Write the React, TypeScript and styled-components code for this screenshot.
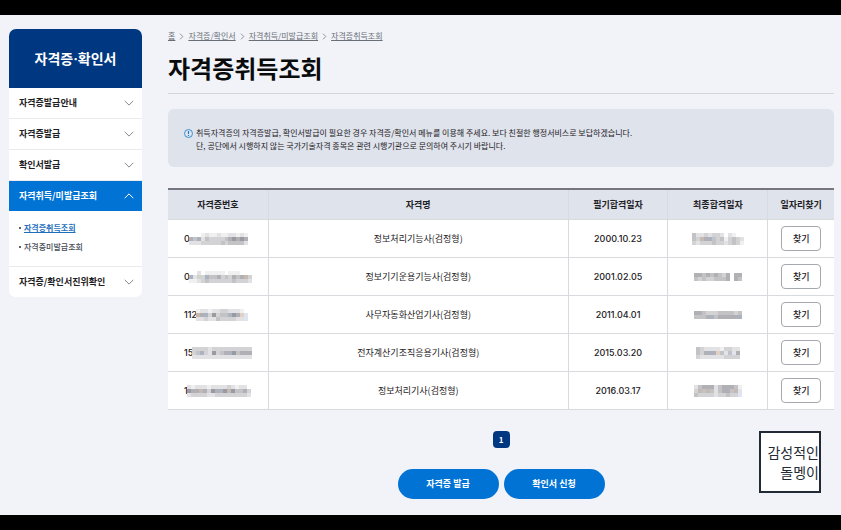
import React from "react";
import styled, { createGlobalStyle, css } from "styled-components";

const GlobalStyle = createGlobalStyle`
  * { box-sizing: border-box; }
  body {
    margin: 0;
    background: #f1f3f8;
    color: #1e2124;
    font-family: "Noto Sans CJK KR", "Noto Sans", sans-serif;
    font-size: 9px;
    line-height: 14px;
  }
  button { font: inherit; cursor: pointer; padding: 0; }
  ul, ol { list-style: none; margin: 0; padding: 0; }
`;

const Page = styled.div`
  display: flex;
  flex-direction: column;
  min-height: 100vh;
  border-top: 15px solid #000;
  border-bottom: 15px solid #000;
`;

const Content = styled.div`
  flex: 1;
  display: flex;
  align-items: flex-start;
  gap: 26px;
  padding: 14px 7px 12px 9px;
`;

const Sidebar = styled.nav`
  flex: 0 0 133px;
  overflow: hidden;
  border-radius: 7px;
  background: #fff;
`;

const SidebarTitle = styled.h2`
  display: flex;
  align-items: center;
  justify-content: center;
  height: 59px;
  margin: 0;
  background: #003781;
  color: #fff;
  font-family: Inter, "Noto Sans CJK KR", sans-serif;
  font-size: 14px;
  font-weight: 700;
  line-height: 20px;
`;

const MenuItem = styled.li`
  & + & { border-top: 1px solid #e9ebee; }
`;

const MenuButton = styled.button<{ $active?: boolean }>`
  display: flex;
  align-items: center;
  justify-content: space-between;
  width: 100%;
  height: 30px;
  padding: 0 8px 0 10px;
  border: 0;
  background: ${(p) => (p.$active ? "#0073d5" : "#fff")};
  color: ${(p) => (p.$active ? "#fff" : "#1e2124")};
  font-weight: 700;
`;

const SubMenu = styled.ul`
  display: grid;
  gap: 5px;
  padding: 10px 10px 12px;
`;

const SubItem = styled.li`
  display: flex;
  align-items: center;
  gap: 3px;
  height: 14px;
  &::before {
    content: "";
    width: 2px;
    height: 2px;
    background: #5a6270;
  }
`;

const SubLink = styled.a<{ $current?: boolean }>`
  color: ${(p) => (p.$current ? "#1f6fbd" : "#464c53")};
  font-size: 8px;
  font-weight: ${(p) => (p.$current ? 700 : 500)};
  text-decoration: ${(p) => (p.$current ? "underline" : "none")};
`;

const Main = styled.main`
  flex: 1;
  min-width: 0;
`;

const Breadcrumb = styled.ol`
  display: flex;
  align-items: center;
  gap: 4px;
  height: 14px;
  font-size: 8px;
`;

const Crumb = styled.li`
  display: flex;
  align-items: center;
  gap: 4px;
`;

const CrumbLink = styled.a`
  color: #6a6f77;
  text-decoration: underline;
`;

const PageTitle = styled.h1`
  margin: 8px 0 0;
  padding-bottom: 8px;
  border-bottom: 1px solid #d3d7dd;
  color: #0a0b0d;
  font-size: 24px;
  font-weight: 700;
  line-height: 34px;
`;

const Notice = styled.section`
  display: flex;
  align-items: flex-start;
  gap: 3px;
  margin-top: 15px;
  padding: 17px 16px 15px;
  border-radius: 6px;
  background: #dee3ec;
  font-size: 8px;
  line-height: 13px;
  & p { margin: 0; }
  & svg { flex: none; margin-top: 3px; }
`;

const Results = styled.table`
  width: 100%;
  margin-top: 21px;
  table-layout: fixed;
  border-collapse: separate;
  border-spacing: 0;
  border-top: 2px solid #74757e;
  text-align: center;
`;

const cell = css`
  padding: 0;
  border-bottom: 1px solid #d8dadd;
  & + & { border-left: 1px solid #d8dadd; }
`;

const HeadCell = styled.th<{ $width: string }>`
  ${cell}
  width: ${(p) => p.$width};
  height: 30px;
  background: #dee3ec;
  font-weight: 700;
`;

const BodyCell = styled.td`
  ${cell}
  height: 38px;
  background: #fff;
`;

const DateText = styled.time`
  font-family: Inter, "Noto Sans CJK KR", sans-serif;
  font-weight: 500;
`;

const MaskedNumber = styled.span`
  display: flex;
  align-items: center;
  width: 68px;
  margin: 0 auto;
  font-family: Inter, "Noto Sans CJK KR", sans-serif;
  font-weight: 500;
  & svg { margin-left: -1px; }
`;

const MaskedDate = styled.span`
  display: flex;
  justify-content: center;
`;

const FindButton = styled.button`
  width: 40px;
  height: 25px;
  border: 1px solid #a5a8ad;
  border-radius: 4px;
  background: #fff;
  color: #1e2124;
  font-weight: 500;
`;

const Pagination = styled.nav`
  display: flex;
  justify-content: center;
  margin-top: 21px;
`;

const PageButton = styled.button`
  width: 17px;
  height: 17px;
  border: 0;
  border-radius: 4px;
  background: #003781;
  color: #fff;
  font-size: 8px;
  font-weight: 700;
`;

const Actions = styled.div`
  display: flex;
  justify-content: center;
  gap: 5px;
  margin-top: 21px;
`;

const ActionButton = styled.button`
  width: 101px;
  height: 30px;
  border: 0;
  border-radius: 15px;
  background: #0073d5;
  color: #fff;
  font-weight: 700;
`;

const Stamp = styled.div`
  position: absolute;
  right: 20px;
  bottom: 37px;
  width: 62px;
  height: 62px;
  padding: 9px 0;
  border: 2px solid #222a36;
  background: #fff;
  color: #222a36;
  font-size: 14px;
  font-weight: 400;
  line-height: 20px;
  text-align: right;
  white-space: nowrap;
`;

function Chevron({ up }: { up?: boolean }) {
  return (
    <svg width="10" height="6" viewBox="0 0 10 6" fill="none" aria-hidden="true">
      <path d={up ? "M.7 5.2 5 .9l4.3 4.3" : "M.7.8 5 5.1 9.3.8"} stroke={up ? "#fff" : "#85888d"} />
    </svg>
  );
}

function CrumbArrow() {
  return (
    <svg width="5" height="7" viewBox="0 0 5 7" fill="none" aria-hidden="true">
      <path d="m1 .7 2.8 2.8L1 6.3" stroke="#777b82" strokeWidth=".8" />
    </svg>
  );
}

function NoticeIcon() {
  return (
    <svg width="9" height="9" viewBox="0 0 9 9" fill="none" aria-hidden="true">
      <circle cx="4.5" cy="4.5" r="4" stroke="#2588cf" strokeWidth=".9" />
      <path d="M4.5 2v3.1M4.5 6v1" stroke="#1779c8" strokeWidth="1.1" />
    </svg>
  );
}

const SHADES: Record<string, string> = {
  "0": "#ffffff",
  "1": "#f0f0f1",
  "2": "#e2e2e4",
  "3": "#d3d3d5",
  "4": "#c3c3c6",
  "5": "#b0b0b5",
  "6": "#9a9aa3",
  b: "#bcc6d2",
  c: "#a9b3c2",
  l: "#dfe4f1",
  g: "#cfd3ca",
  p: "#e0d0c6",
  t: "#c6bab0",
};

function Mosaic({ rows }: { rows: string[] }) {
  const width = Math.max(...rows.map((row) => row.length)) * 4;
  const height = rows.length * 4;
  return (
    <svg width={width} height={height} viewBox={`0 0 ${width} ${height}`} shapeRendering="crispEdges" aria-hidden="true">
      {rows.flatMap((row, y) =>
        [...row].map((shade, x) => (
          <rect key={`${x}-${y}`} x={x * 4} y={y * 4} width="4" height="4" fill={SHADES[shade]} />
        ))
      )}
    </svg>
  );
}

const menuBefore = ["자격증발급안내", "자격증발급", "확인서발급"];
const crumbs = ["홈", "자격증/확인서", "자격취득/미발급조회", "자격증취득조회"];

const columns = [
  { label: "자격증번호", width: "15%" },
  { label: "자격명", width: "45%" },
  { label: "필기합격일자", width: "15%" },
  { label: "최종합격일자", width: "15%" },
  { label: "일자리찾기", width: "10%" },
];

const certificates = [
  { prefix: "0", number: ["0001211211221210", "5b52433334565650", "2223333343444420"], name: "정보처리기능사(검정형)", date: "2000.10.23", final: ["4223233202100", "43t5c43413432", "3233343323431"] },
  { prefix: "0", number: ["0020111110111000", "c2g3c445343545t3", "1123433333343332"], name: "정보기기운용기능사(검정형)", date: "2001.02.05", final: ["554545435055", "434334445054"] },
  { prefix: "112", number: ["1221223322210", "t5c36344c65pl", "223224333322l"], name: "사무자동화산업기사(검정형)", date: "2011.04.01", final: ["554333444434", "4445c455555c"] },
  { prefix: "15", number: ["333323333333333", "34c326345c64555", "222222222222222"], name: "전자계산기조직응용기사(검정형)", date: "2015.03.20", final: ["43222213322", "435c5p4l4l5", "32222223333"] },
  { prefix: "1", number: ["2122212222321220", "655t5365c6t64453", "2333322333333332"], name: "정보처리기사(검정형)", date: "2016.03.17", final: ["245552455541", "3t4t424554tl", "43333233433l"] },
];

export default function App() {
  return (
    <>
      <GlobalStyle />
      <Page>
        <Content>
          <Sidebar aria-label="자격증·확인서">
            <SidebarTitle>자격증·확인서</SidebarTitle>
            <ul>
              {menuBefore.map((label) => (
                <MenuItem key={label}>
                  <MenuButton type="button">{label}<Chevron /></MenuButton>
                </MenuItem>
              ))}
              <MenuItem>
                <MenuButton type="button" $active aria-expanded="true">자격취득/미발급조회<Chevron up /></MenuButton>
                <SubMenu>
                  <SubItem><SubLink href="#acquired" $current aria-current="page">자격증취득조회</SubLink></SubItem>
                  <SubItem><SubLink href="#unissued">자격증미발급조회</SubLink></SubItem>
                </SubMenu>
              </MenuItem>
              <MenuItem>
                <MenuButton type="button">자격증/확인서진위확인<Chevron /></MenuButton>
              </MenuItem>
            </ul>
          </Sidebar>

          <Main>
            <Breadcrumb>
              {crumbs.map((label, index) => (
                <Crumb key={label}>
                  {index > 0 && <CrumbArrow />}
                  <CrumbLink href="#path">{label}</CrumbLink>
                </Crumb>
              ))}
            </Breadcrumb>
            <PageTitle>자격증취득조회</PageTitle>

            <Notice>
              <NoticeIcon />
              <div>
                <p>취득자격증의 자격증발급, 확인서발급이 필요한 경우 자격증/확인서 메뉴를 이용해 주세요. 보다 친절한 행정서비스로 보답하겠습니다.</p>
                <p>단, 공단에서 시행하지 않는 국가기술자격 종목은 관련 시행기관으로 문의하여 주시기 바랍니다.</p>
              </div>
            </Notice>

            <Results>
              <thead>
                <tr>
                  {columns.map((column) => (
                    <HeadCell key={column.label} scope="col" $width={column.width}>{column.label}</HeadCell>
                  ))}
                </tr>
              </thead>
              <tbody>
                {certificates.map((item) => (
                  <tr key={item.name}>
                    <BodyCell><MaskedNumber>{item.prefix}<Mosaic rows={item.number} /></MaskedNumber></BodyCell>
                    <BodyCell>{item.name}</BodyCell>
                    <BodyCell><DateText>{item.date}</DateText></BodyCell>
                    <BodyCell><MaskedDate><Mosaic rows={item.final} /></MaskedDate></BodyCell>
                    <BodyCell><FindButton type="button">찾기</FindButton></BodyCell>
                  </tr>
                ))}
              </tbody>
            </Results>

            <Pagination aria-label="페이지">
              <PageButton type="button" aria-current="page">1</PageButton>
            </Pagination>
            <Actions>
              <ActionButton type="button">자격증 발급</ActionButton>
              <ActionButton type="button">확인서 신청</ActionButton>
            </Actions>
          </Main>
        </Content>
        <Stamp>감성적인<br />돌멩이</Stamp>
      </Page>
    </>
  );
}
